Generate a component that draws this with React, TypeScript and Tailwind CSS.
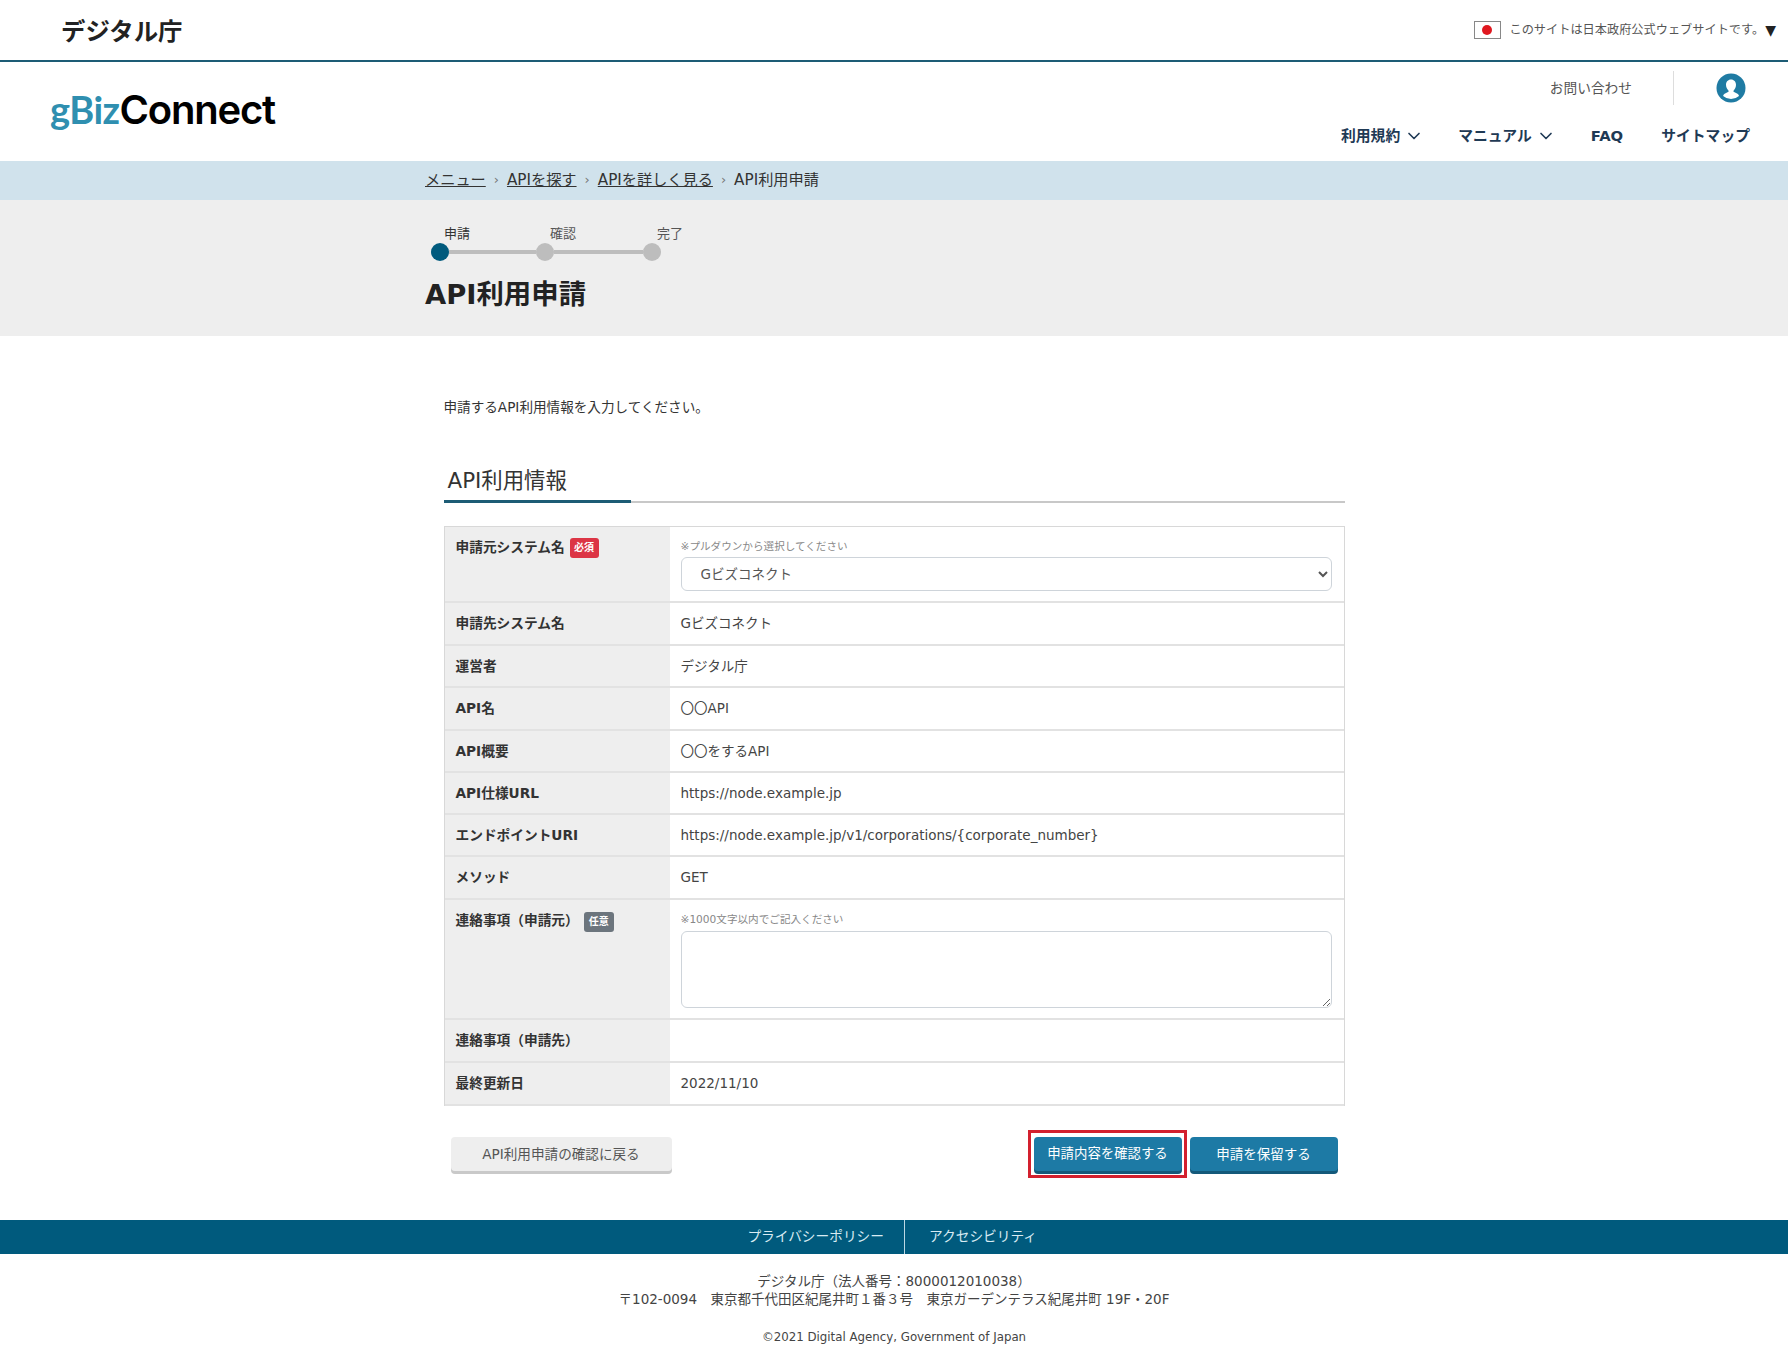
import { ChevronDown } from "lucide-react"

const rows = [
  { label: "申請先システム名", value: "Gビズコネクト", h: "h-[43px]" },
  { label: "運営者", value: "デジタル庁", h: "h-[42px]" },
  { label: "API名", value: "〇〇API", h: "h-[43px]" },
  { label: "API概要", value: "〇〇をするAPI", h: "h-[42px]" },
  { label: "API仕様URL", value: "https://node.example.jp", h: "h-[42px]" },
  { label: "エンドポイントURI", value: "https://node.example.jp/v1/corporations/{corporate_number}", h: "h-[42px]" },
  { label: "メソッド", value: "GET", h: "h-[43px]" },
]

const Row = ({ label, value, h }: { label: string; value: string; h: string }) => (
  <div className={`flex border-b-2 border-[#e2e2e2] ${h}`}>
    <div className="w-[225px] shrink-0 bg-[#eeeeee] pl-[11px] flex items-center font-bold text-[13.7px] text-[#333]">{label}</div>
    <div className="flex-1 pl-[11px] flex items-center text-[13.5px] text-[#444]">{value}</div>
  </div>
)

const App = () => {
  return (
    <div className="w-full min-h-[1365px] bg-white font-['DejaVu_Sans','Noto_Sans_CJK_JP',sans-serif] text-[#333]">
      {/* government bar */}
      <div className="h-[62px] border-b-2 border-[#1d5c75] flex items-center justify-between pl-[61px] pr-[11px]">
        <span className="mt-[4px] text-[24.4px] font-bold text-[#222]">デジタル庁</span>
        <div className="flex items-center">
          <span className="w-[27px] h-[18px] border border-[#888] flex items-center justify-center">
            <span className="w-[10px] h-[10px] rounded-full bg-[#e0181f]" />
          </span>
          <span className="ml-[9px] text-[12.2px] text-[#555]">このサイトは日本政府公式ウェブサイトです。</span>
          <span className="ml-[1px] mr-[1px] text-[14px] leading-none text-[#222]">▼</span>
        </div>
      </div>

      {/* header */}
      <div className="h-[99px] flex justify-between pl-[50px] pr-[38px]">
        <div className="pt-[22px] text-[40px] leading-[50px] flex items-baseline">
          <span className="font-['Lato',sans-serif] font-bold text-[38px] tracking-[-0.5px] text-[#2f8fb0]">gBiz</span>
          <span className="font-['Inter',sans-serif] font-semibold tracking-[-1.2px] text-black">Connect</span>
        </div>
        <div className="flex flex-col items-end">
          <div className="flex items-center h-[34px] mt-[9px]">
            <span className="text-[13.7px] text-[#555]">お問い合わせ</span>
            <span className="w-px h-[34px] bg-[#ddd] ml-[41px]" />
            <svg className="ml-[42px] mr-[4px]" width="30" height="30" viewBox="0 0 30 30">
              <circle cx="15" cy="15" r="14.5" fill="#1f7ba3" />
              <path d="M15 6.5c3 0 5 2.3 5 5.3 0 2.3-1 4.4-2.3 5.6-.5.6-.3 1.3.4 1.700l3.400 1.700c.9.5 1.400 1.300 1.500 2.200A12 12 0 0 1 15 26a12 12 0 0 1-7.900-3c.1-.9.6-1.700 1.500-2.200l3.400-1.700c.7-.4.9-1.100.4-1.700-1.300-1.200-2.400-3.300-2.400-5.600 0-3 2-5.300 5-5.300z" fill="#fff" />
            </svg>
          </div>
          <nav className="flex items-center mt-[18px] h-[26px] text-[14.8px] font-bold text-[#1f3a55]">
            <span>利用規約</span>
            <ChevronDown className="ml-[4px] mr-[-3px] w-[20px] h-[20px]" strokeWidth={2} />
            <span className="ml-[37px]">マニュアル</span>
            <ChevronDown className="ml-[4px] mr-[-3px] w-[20px] h-[20px]" strokeWidth={2} />
            <span className="ml-[38px]">FAQ</span>
            <span className="ml-[38px]">サイトマップ</span>
          </nav>
        </div>
      </div>

      {/* breadcrumb */}
      <div className="h-[39px] bg-[#d0e2ec] flex items-center">
        <div className="w-[938px] mx-auto mt-[-1px] flex items-center text-[15.2px] text-[#333]">
          <a className="underline">メニュー</a>
          <span className="mx-[8px] text-[#777] text-[13px]">›</span>
          <a className="underline">APIを探す</a>
          <span className="mx-[8px] text-[#777] text-[13px]">›</span>
          <a className="underline">APIを詳しく見る</a>
          <span className="mx-[8px] text-[#777] text-[13px]">›</span>
          <span>API利用申請</span>
        </div>
      </div>

      {/* steps and page title */}
      <div className="h-[136px] bg-[#eeeeee]">
        <div className="w-[938px] mx-auto pt-[25px]">
          <div className="flex text-[13px] leading-[18px] text-[#555] pl-[19px]">
            <span className="w-[106px] text-[#333]">申請</span>
            <span className="w-[107px]">確認</span>
            <span>完了</span>
          </div>
          <div className="flex items-center pl-[6px]">
            <span className="w-[18px] h-[18px] rounded-full bg-[#005a7d] shrink-0" />
            <span className="w-[87px] h-[4px] bg-[#bdbdbd]" />
            <span className="w-[18px] h-[18px] rounded-full bg-[#bdbdbd] shrink-0" />
            <span className="w-[89px] h-[4px] bg-[#bdbdbd]" />
            <span className="w-[18px] h-[18px] rounded-full bg-[#bdbdbd] shrink-0" />
          </div>
          <h1 className="mt-[15px] text-[27.4px] leading-[38px] font-bold text-[#222]">API利用申請</h1>
        </div>
      </div>

      {/* form */}
      <div className="w-[901px] mx-auto">
        <p className="mt-[61px] text-[13.6px] leading-[20px] text-[#333]">申請するAPI利用情報を入力してください。</p>
        <div className="relative mt-[41px] h-[45px] border-b-2 border-[#c8c8c8] pl-[4px] text-[21.4px] leading-[46px] text-[#333]">
          API利用情報
          <span className="absolute left-0 bottom-[-2px] w-[187px] h-[3px] bg-[#1d5c75]" />
        </div>

        <div className="mt-[23px] border-x border-t border-[#d8d8d8]">
          <div className="flex h-[76px] border-b-2 border-[#e2e2e2]">
            <div className="w-[225px] shrink-0 bg-[#eeeeee] pl-[11px] pt-[10px] font-bold text-[13.7px] leading-[20px] text-[#333] flex items-start">
              申請元システム名
              <span className="ml-[5px] mt-px w-[29px] h-[20px] rounded-[3px] bg-[#dc3545] text-white text-[10px] leading-[20px] text-center">必須</span>
            </div>
            <div className="flex-1 pl-[11px] pr-3 pt-[11px]">
              <p className="text-[10.6px] leading-[16px] text-[#888]">※プルダウンから選択してください</p>
              <select className="mt-[3px] block w-full h-[34px] pl-[15px] pr-[4px] border border-[#ced4da] rounded-[6px] text-[13.5px] text-[#555]">
                <option>Gビズコネクト</option>
              </select>
            </div>
          </div>
          {rows.map((r) => (
            <Row key={r.label} label={r.label} value={r.value} h={r.h} />
          ))}
          <div className="flex h-[120px] border-b-2 border-[#e2e2e2]">
            <div className="w-[225px] shrink-0 bg-[#eeeeee] pl-[11px] pt-[10px] font-bold text-[13.7px] leading-[20px] text-[#333] flex items-start">
              連絡事項（申請元）
              <span className="ml-[5px] mt-[2px] w-[30px] h-[20px] rounded-[3px] bg-[#6c757d] text-white text-[10px] leading-[20px] text-center">任意</span>
            </div>
            <div className="flex-1 pl-[11px] pr-3 pt-[11px]">
              <p className="text-[10.6px] leading-[16px] text-[#888]">※1000文字以内でご記入ください</p>
              <textarea className="mt-[4px] block w-full h-[77px] border border-[#ced4da] rounded-[6px]" />
            </div>
          </div>
          <Row label="連絡事項（申請先）" value="" h="h-[43px]" />
          <Row label="最終更新日" value="2022/11/10" h="h-[43px]" />
        </div>

        <div className="mt-[31px] flex justify-between pl-[7px] pr-[7px]">
          <button className="w-[221px] h-[34px] rounded-[4px] bg-[#eeeeee] shadow-[0_3px_0_#c9c9c9] text-[13.6px] text-[#555]">API利用申請の確認に戻る</button>
          <div className="flex gap-[8px]">
            <div className="relative">
              <button className="w-[148px] h-[34px] rounded-[4px] bg-[#1d7aa5] shadow-[0_3px_0_#14597a] text-[13.4px] text-white">申請内容を確認する</button>
              <span className="absolute left-[-6px] right-[-5px] top-[-7px] bottom-[-7px] border-3 border-[#d3202e] pointer-events-none" />
            </div>
            <button className="w-[148px] h-[34px] rounded-[4px] bg-[#1d7aa5] shadow-[0_3px_0_#14597a] text-[13.5px] text-white">申請を保留する</button>
          </div>
        </div>
      </div>

      {/* footer */}
      <div className="mt-[49px] h-[34px] bg-[#005a7d] flex justify-center text-[13.7px] text-[#d8ebf3]">
        <a className="w-[230px] ml-[22px] pr-[20px] pb-[2px] flex items-center justify-end border-r border-[#bcd8e4]">プライバシーポリシー</a>
        <a className="pl-[24px] pb-[2px] w-[230px] flex items-center">アクセシビリティ</a>
      </div>
      <div className="mt-[18px] text-center text-[13.5px] leading-[18px] text-[#444]">
        <p>デジタル庁（法人番号：8000012010038）</p>
        <p>〒102-0094　東京都千代田区紀尾井町１番３号　東京ガーデンテラス紀尾井町 19F・20F</p>
        <p className="mt-[20px] text-[11.8px]">©2021 Digital Agency, Government of Japan</p>
      </div>
    </div>
  )
}

export default App
